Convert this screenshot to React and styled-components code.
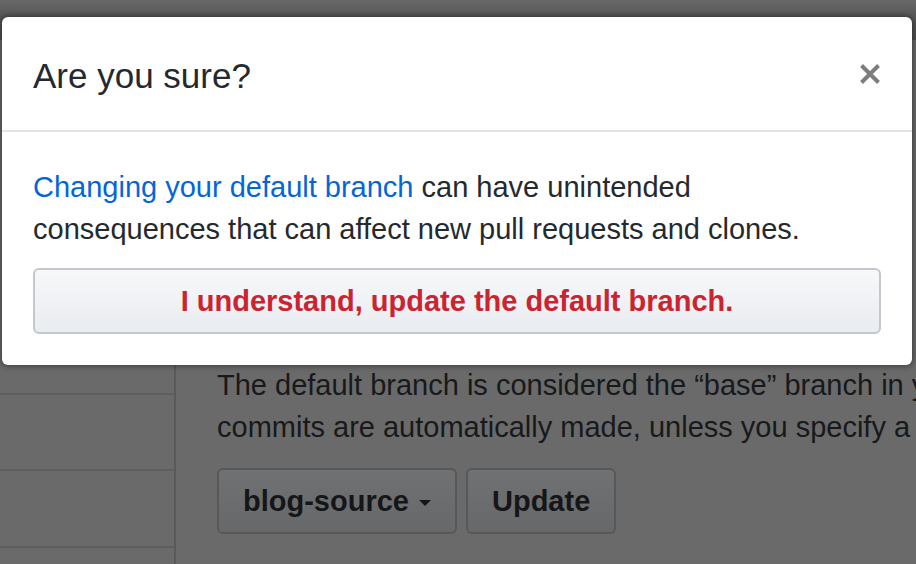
import React from "react";
import styled, { createGlobalStyle } from "styled-components";

const GlobalStyle = createGlobalStyle`
  html, body {
    margin: 0;
    padding: 0;
    background: #6a6a6a;
    font-family: "Liberation Sans", Arial, Helvetica, sans-serif;
  }
  * { box-sizing: border-box; }
`;

const Page = styled.div`
  position: relative;
  width: 916px;
  height: 564px;
  overflow: hidden;
  display: flex;
  flex-direction: column;
  background: #6a6a6a;
`;

const TopBand = styled.div`
  height: 40px;
  flex: none;
  background: linear-gradient(180deg, #686868 0%, #575757 45%, #4f4f4f 100%);
`;

const Layout = styled.div`
  flex: 1;
  display: flex;
`;

const Sidebar = styled.aside`
  width: 176px;
  flex: none;
  border-right: 2px solid #5a5a5a;
  display: flex;
  flex-direction: column;
`;

const SideItem = styled.div`
  height: ${(p) => p.$h}px;
  flex: none;
  border-bottom: 2px solid #5e5e5e;
`;

const Main = styled.main`
  flex: 1;
  min-width: 0;
  padding: 324px 0 0 41px;
`;

const PageText = styled.p`
  margin: 0;
  font-size: 29px;
  line-height: 42px;
  color: #18191b;
  white-space: nowrap;
`;

const ButtonRow = styled.div`
  margin-top: 20px;
  display: flex;
  gap: 9px;
`;

const PageButton = styled.button`
  height: 66px;
  padding: 0 24px;
  border: 2px solid #575859;
  border-radius: 6px;
  background: linear-gradient(180deg, #707173 0%, #67696b 90%);
  font-family: inherit;
  font-size: 29px;
  font-weight: 700;
  color: #151618;
  display: flex;
  align-items: center;
  gap: 10px;
`;

const Caret = styled.span`
  width: 0;
  height: 0;
  border-left: 6px solid transparent;
  border-right: 6px solid transparent;
  border-top: 6px solid #151618;
  margin-top: 3px;
`;

const Modal = styled.div`
  position: absolute;
  left: 2px;
  top: 17px;
  width: 910px;
  height: 348px;
  background: #fff;
  border-radius: 6px;
  box-shadow: 0 0 6px 1px rgba(0, 0, 0, 0.45);
  display: flex;
  flex-direction: column;
`;

const ModalHeader = styled.header`
  height: 115px;
  flex: none;
  display: flex;
  align-items: center;
  justify-content: space-between;
  padding: 0 31px;
  border-bottom: 2px solid #e1e4e8;
`;

const Title = styled.h2`
  margin: 4px 0 0;
  font-size: 35px;
  line-height: 35px;
  font-weight: 400;
  color: #24292e;
`;

const CloseButton = styled.button`
  width: 22px;
  height: 22px;
  padding: 0;
  border: 0;
  background: none;
  display: flex;
  margin-top: 1px;
`;

const ModalBody = styled.div`
  padding: 34px 31px 31px;
  display: flex;
  flex-direction: column;
`;

const BodyText = styled.p`
  margin: 0;
  font-size: 29px;
  line-height: 42px;
  color: #24292e;
`;

const Link = styled.a`
  color: #0366d6;
  text-decoration: none;
`;

const DangerButton = styled.button`
  margin-top: 18px;
  height: 66px;
  width: 100%;
  border: 2px solid #c4c7cb;
  border-radius: 6px;
  background: linear-gradient(180deg, #f7f8fa 0%, #eaedf1 90%);
  font-family: inherit;
  font-size: 29px;
  font-weight: 700;
  color: #cb2431;
  display: flex;
  align-items: center;
  justify-content: center;
  padding-top: 2px;
`;

const XIcon = () => (
  <svg width="22" height="22" viewBox="0 0 22 22" aria-hidden="true">
    <path d="M2.5 2.5 L19.5 19.5 M19.5 2.5 L2.5 19.5" stroke="#7d7d7d" strokeWidth="4" strokeLinecap="butt" fill="none" />
  </svg>
);

export default function App() {
  return (
    <>
      <GlobalStyle />
      <Page>
        <TopBand />
        <Layout>
          <Sidebar>
            <SideItem $h={355} />
            <SideItem $h={76} />
            <SideItem $h={77} />
          </Sidebar>
          <Main>
            <PageText>
              The default branch is considered the “base” branch in your repository, against which all pull requests and code
              <br />
              commits are automatically made, unless you specify a different branch.
            </PageText>
            <ButtonRow>
              <PageButton>
                blog-source
                <Caret />
              </PageButton>
              <PageButton>Update</PageButton>
            </ButtonRow>
          </Main>
        </Layout>
        <Modal role="dialog" aria-modal="true">
          <ModalHeader>
            <Title>Are you sure?</Title>
            <CloseButton aria-label="Close">
              <XIcon />
            </CloseButton>
          </ModalHeader>
          <ModalBody>
            <BodyText>
              <Link href="#">Changing your default branch</Link> can have unintended consequences that can affect new pull requests and clones.
            </BodyText>
            <DangerButton>I understand, update the default branch.</DangerButton>
          </ModalBody>
        </Modal>
      </Page>
    </>
  );
}
